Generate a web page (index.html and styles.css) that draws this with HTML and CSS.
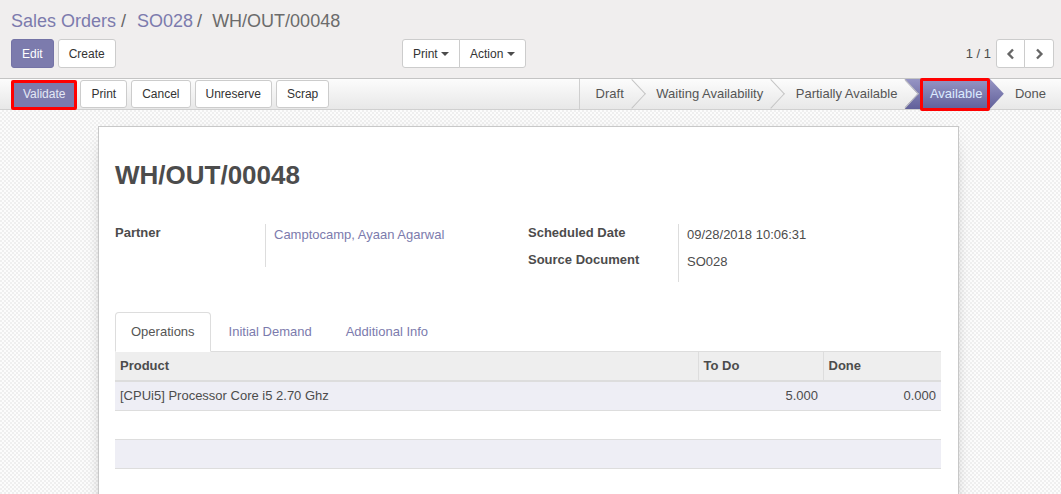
FILE: index.html
```html
<!DOCTYPE html>
<html>
<head>
<meta charset="utf-8">
<title>WH/OUT/00048</title>
<link rel="stylesheet" href="styles.css">
</head>
<body>
<div class="cp">
  <ol class="crumbs">
    <li><a class="link">Sales Orders</a></li>
    <li class="sep">/</li>
    <li><a class="link">SO028</a></li>
    <li class="sep sep-2">/</li>
    <li class="current">WH/OUT/00048</li>
  </ol>
  <div class="cp-row">
    <div class="cp-buttons">
      <button class="btn btn-primary">Edit</button>
      <button class="btn">Create</button>
    </div>
    <div class="cp-sidebar">
      <div class="btn-group">
        <button class="btn">Print <span class="caret"></span></button>
        <button class="btn">Action <span class="caret"></span></button>
      </div>
    </div>
    <div class="pager">
      <span class="pager-value">1 / 1</span>
      <div class="btn-group">
        <button class="btn btn-icon" aria-label="Previous"><svg width="10" height="12" viewBox="0 0 10 12"><polyline points="7,1.5 2.6,6 7,10.5" fill="none" stroke="#666" stroke-width="2.4"/></svg></button>
        <button class="btn btn-icon wide" aria-label="Next"><svg width="10" height="12" viewBox="0 0 10 12"><polyline points="3,1.5 7.4,6 3,10.5" fill="none" stroke="#666" stroke-width="2.4"/></svg></button>
      </div>
    </div>
  </div>
</div>

<div class="statusbar">
  <div class="sb-buttons">
    <button class="btn btn-sb btn-primary marked">Validate</button>
    <button class="btn btn-sb">Print</button>
    <button class="btn btn-sb">Cancel</button>
    <button class="btn btn-sb">Unreserve</button>
    <button class="btn btn-sb">Scrap</button>
  </div>
  <div class="sb-status">
    <span class="st first">Draft</span>
    <span class="st">Waiting Availability</span>
    <span class="st">Partially Available</span>
    <span class="st active marked-st">Available</span>
    <span class="st last">Done</span>
  </div>
</div>

<div class="content">
  <div class="sheet">
    <h1 class="title">WH/OUT/00048</h1>
    <div class="groups">
      <div class="group">
        <div class="lbl tall">Partner</div>
        <div class="val"><a class="link">Camptocamp, Ayaan Agarwal</a></div>
      </div>
      <div class="group">
        <div class="lbl">Scheduled Date</div>
        <div class="val">09/28/2018 10:06:31</div>
        <div class="lbl end">Source Document</div>
        <div class="val">SO028</div>
      </div>
    </div>

    <ul class="tabs">
      <li class="active"><a>Operations</a></li>
      <li><a>Initial Demand</a></li>
      <li><a>Additional Info</a></li>
    </ul>

    <table class="list">
      <colgroup>
        <col class="c-product">
        <col class="c-todo">
        <col>
      </colgroup>
      <thead>
        <tr><th>Product</th><th>To Do</th><th>Done</th></tr>
      </thead>
      <tbody>
        <tr><td>[CPUi5] Processor Core i5 2.70 Ghz</td><td class="num">5.000</td><td class="num">0.000</td></tr>
        <tr><td>&nbsp;</td><td></td><td></td></tr>
        <tr><td>&nbsp;</td><td></td><td></td></tr>
        <tr><td>&nbsp;</td><td></td><td></td></tr>
      </tbody>
    </table>
  </div>
</div>
</body>
</html>
```

FILE: styles.css
```css
*, *::before, *::after { box-sizing: border-box; }
html, body { margin: 0; padding: 0; }
body {
  font-family: "Liberation Sans", Arial, sans-serif;
  font-size: 13px;
  line-height: 18px;
  color: #4c4c4c;
  background: #fff;
}
button { font-family: inherit; cursor: pointer; }
.link { color: #7c7bad; text-decoration: none; }

/* control panel */
.cp {
  background: #f0eeee;
  border-bottom: 1px solid #c4c4c4;
  padding: 11px 7px 10px 11px;
}
.crumbs {
  list-style: none;
  margin: 0;
  padding: 0;
  display: flex;
  font-size: 18px;
  line-height: 20px;
  height: 20px;
}
.crumbs .sep { color: #666; margin: 0 11px 0 5px; }
.crumbs .sep-2 { margin: 0 10px 0 4px; }
.crumbs .current { color: #6b6b6b; }
.cp-row {
  display: grid;
  grid-template-columns: 391px 1fr auto;
  align-items: center;
  margin-top: 8px;
}
.cp-buttons { display: flex; gap: 4px; }
.btn {
  height: 29px;
  padding: 0 10px;
  font-size: 12px;
  line-height: 18px;
  border: 1px solid #ccc;
  background: #fff;
  color: #333;
  border-radius: 3px;
  white-space: nowrap;
}
.btn-primary {
  background: #7c7bad;
  border-color: #7473a6;
  color: #fff;
}
.btn-group { display: flex; }
.btn-group .btn { border-radius: 0; }
.btn-group .btn:first-child { border-radius: 3px 0 0 3px; }
.btn-group .btn:last-child { border-radius: 0 3px 3px 0; margin-left: -1px; }
.caret {
  display: inline-block;
  width: 8px;
  height: 4px;
  margin-left: 0;
  vertical-align: middle;
  border-top: 4px solid #4c4c4c;
  border-left: 4px solid transparent;
  border-right: 4px solid transparent;
}
.pager { display: flex; align-items: center; }
.pager-value { font-size: 13px; margin-right: 5px; color: #4c4c4c; }
.btn-icon {
  width: 29px;
  padding: 0;
  display: flex;
  align-items: center;
  justify-content: center;
}
.btn-icon.wide { width: 30px; }

/* status bar */
.statusbar {
  display: flex;
  height: 31px;
  border-bottom: 1px solid #d0d0d0;
  background: linear-gradient(#fcfcfc, #e8e8e8);
}
.sb-buttons { display: flex; gap: 4px; padding: 1px 0 0 12px; }
.btn-sb { height: 28px; }
.btn-sb.btn-primary { color: #e4e9f6; border-color: #7c7bad; }
.marked { position: relative; }
.marked::after {
  content: "";
  position: absolute;
  left: -2px;
  right: -2px;
  top: -1px;
  bottom: -3px;
  border: 3px solid #f00;
  border-radius: 2px;
}
.sb-status {
  margin-left: auto;
  display: flex;
  height: 30px;
  border-left: 1px solid #cfcfcf;
}
.st {
  position: relative;
  padding: 0 8px 0 24.5px;
  line-height: 30px;
  color: #555;
  white-space: nowrap;
}
.st.first { padding-left: 15.5px; }
.st.last { padding-right: 15px; }
.st::after {
  content: "";
  position: absolute;
  z-index: 1;
  left: 100%;
  top: 50%;
  width: 21.2px;
  height: 21.2px;
  transform: translate(-50%, -50%) scaleX(0.93) rotate(45deg);
  border-top: 1px solid #c4c4c4;
  border-right: 1px solid #c4c4c4;
  background: linear-gradient(135deg, #fcfcfc, #e8e8e8);
  clip-path: polygon(-2px -2px, calc(100% + 2px) -2px, calc(100% + 2px) calc(100% + 2px), calc(100% - 1px) calc(100% + 2px), -2px 1px);
}
.st.last::after { display: none; }
.st.active {
  background: linear-gradient(#9695c4, #61609a);
  color: #dcebff;
}
.st.active::after {
  border: none;
  background: linear-gradient(135deg, #9695c4, #61609a);
}
.marked-st::before {
  content: "";
  position: absolute;
  z-index: 2;
  left: 14.5px;
  top: -1px;
  width: 70px;
  height: 33px;
  border: 3px solid #f00;
  border-radius: 2px;
}

/* content */
.content {
  background-color: #f7f7f7;
  background-image: repeating-conic-gradient(#efefef 0 25%, #fcfcfc 0 50%);
  background-size: 4px 4px;
  padding-top: 16px;
}
.sheet {
  margin-left: 98px;
  width: 861px;
  min-height: 420px;
  background: #fff;
  border: 1px solid #c8c8c8;
  border-bottom: 0;
  box-shadow: 0 5px 20px -15px #000;
  padding: 0 17px 40px 16px;
}
.title {
  margin: 34px 0 35px 0;
  font-size: 26px;
  line-height: 28px;
  font-weight: bold;
  color: #4c4c4c;
}
.groups {
  display: grid;
  grid-template-columns: 413px 1fr;
}
.group {
  display: grid;
  grid-template-columns: 151px 1fr;
  align-content: start;
}
.lbl {
  font-weight: bold;
  border-right: 1px solid #ddd;
  padding-bottom: 9px;
}
.lbl.tall { padding-bottom: 25px; }
.lbl.end { padding-bottom: 13px; }
.val { padding: 2px 0 0 8px; }

/* tabs */
.tabs {
  display: flex;
  list-style: none;
  margin: 30px 0 0 0;
  padding: 0;
  border-bottom: 1px solid #ddd;
}
.tabs li { margin: 0 2px -1px 0; }
.tabs a {
  display: block;
  padding: 10px 15px;
  line-height: 18px;
  border: 1px solid transparent;
  border-radius: 4px 4px 0 0;
  color: #7c7bad;
}
.tabs .active a {
  color: #555;
  background: #fff;
  border-color: #ddd #ddd transparent;
}

/* list */
.list { width: 100%; border-collapse: collapse; }
.c-product { width: 583px; }
.c-todo { width: 125px; }
.list th, .list td {
  padding: 5px;
  line-height: 18px;
  text-align: left;
  white-space: nowrap;
}
.list thead th {
  background: #eee;
  border-bottom: 2px solid #ddd;
  font-weight: bold;
}
.list thead th + th { border-left: 1px solid #ddd; }
.list tbody td { border-top: 1px solid #ddd; }
.list tbody tr:nth-child(odd) td { background: #eeeef5; }
.list .num { text-align: right; }
```
